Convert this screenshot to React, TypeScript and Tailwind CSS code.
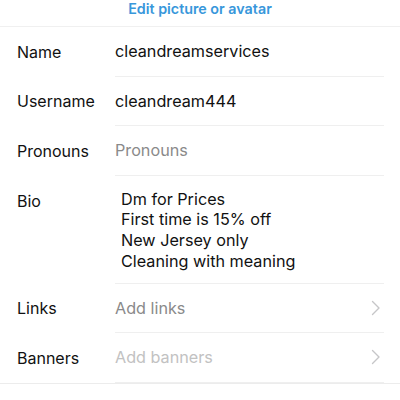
const font = { fontFamily: 'Inter, "Liberation Sans", sans-serif' };

type Row = {
  label: string;
  value: string;
  tone: 'value' | 'placeholder' | 'faint';
  chevron?: boolean;
};

const rows: Row[] = [
  { label: 'Name', value: 'cleandreamservices', tone: 'value' },
  { label: 'Username', value: 'cleandream444', tone: 'value' },
  { label: 'Pronouns', value: 'Pronouns', tone: 'placeholder' },
];

const links: Row[] = [
  { label: 'Links', value: 'Add links', tone: 'placeholder', chevron: true },
  { label: 'Banners', value: 'Add banners', tone: 'faint', chevron: true },
];

const toneClass = {
  value: 'text-[#111111]',
  placeholder: 'text-[#8a8a8a]',
  faint: 'text-[#c2c2c2]',
};

function Chevron() {
  return (
    <svg width="10" height="16" viewBox="0 0 10 16" fill="none" className="mr-[3px]">
      <polyline
        points="1.5,1.5 8,8 1.5,14.5"
        stroke="#c6c6c8"
        strokeWidth="1.4"
        strokeLinecap="round"
        strokeLinejoin="round"
      />
    </svg>
  );
}

function FieldRow({ row }: { row: Row }) {
  return (
    <div className="flex h-[49.5px] items-stretch">
      <div className="flex w-[115px] shrink-0 items-center pl-[17px] text-[16px] text-[#111111]">
        {row.label}
      </div>
      <div className="mr-[16px] flex flex-1 items-center justify-between border-b border-[#efefef]">
        <span className={`text-[16.2px] ${toneClass[row.tone]}`}>{row.value}</span>
        {row.chevron && <Chevron />}
      </div>
    </div>
  );
}

export default function App() {
  return (
    <div className="h-[400px] w-[400px] overflow-hidden bg-white" style={font}>
      {/* Header link */}
      <div className="flex h-[27px] justify-center border-b border-[#f0f0f0]">
        <span className="text-[14.3px] font-semibold leading-[17px] text-[#3897db]">
          Edit picture or avatar
        </span>
      </div>

      {rows.map((r) => (
        <FieldRow key={r.label} row={r} />
      ))}

      {/* Bio */}
      <div className="flex h-[108px] items-stretch">
        <div className="w-[115px] shrink-0 pl-[17px] pt-[15px] text-[16px] leading-[20.7px] text-[#111111]">
          Bio
        </div>
        <div className="mr-[16px] flex-1 border-b border-[#efefef] pl-[6px] pt-[13px] text-[16.2px] leading-[20.7px] text-[#111111]">
          <div>Dm for Prices</div>
          <div>First time is 15% off</div>
          <div>New Jersey only</div>
          <div>Cleaning with meaning</div>
        </div>
      </div>

      {links.map((r) => (
        <FieldRow key={r.label} row={r} />
      ))}

      <div className="border-t border-[#ececec]" />
    </div>
  );
}
